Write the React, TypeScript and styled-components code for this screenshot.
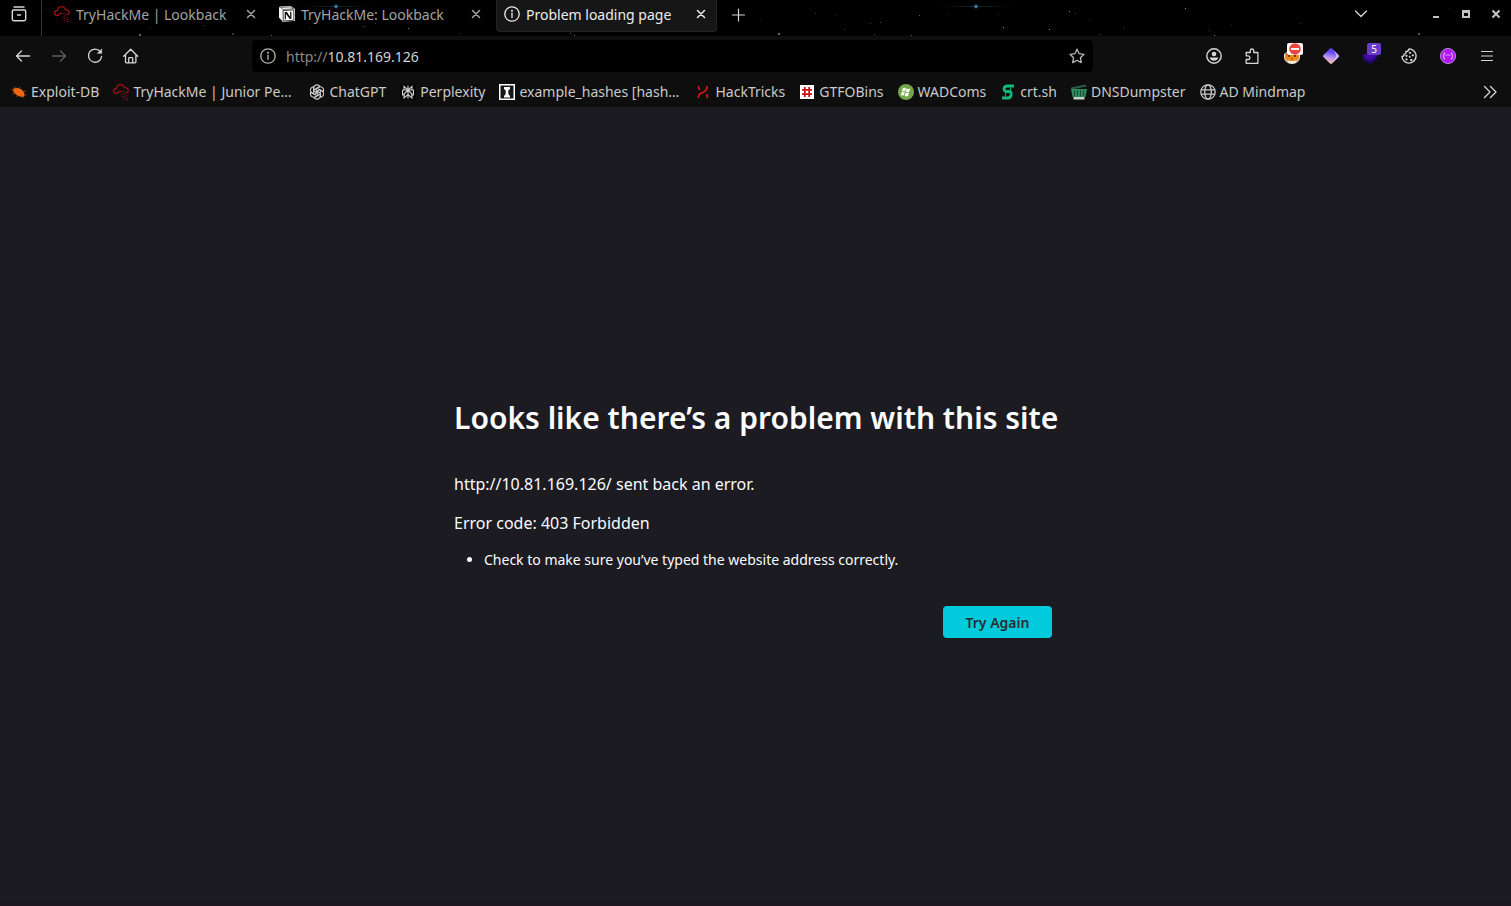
import React from 'react';
import styled, { createGlobalStyle } from 'styled-components';

const Global = createGlobalStyle`
  * { box-sizing: border-box; }
  html, body { margin: 0; padding: 0; }
  body {
    background: #1c1b22;
    color: #fbfbfe;
    font-family: "Noto Sans", sans-serif;
    font-size: 14px;
  }
  button, input { font: inherit; color: inherit; }
`;

const Window = styled.div`
  display: flex;
  flex-direction: column;
  min-height: 100vh;
  border-bottom: 4px solid #1a1721;
`;

const Chrome = styled.header`
  position: relative;
  background: #000;
  border-bottom: 1px solid #1f1b26;
  overflow: hidden;
`;

const Sky = styled.svg`
  position: absolute;
  top: 0;
  left: 0;
  width: 1920px;
  height: 108px;
`;

const IconButton = styled.button<{ $size?: number; $color?: string }>`
  display: flex;
  flex: none;
  align-items: center;
  justify-content: center;
  width: ${(p) => p.$size ?? 32}px;
  height: ${(p) => p.$size ?? 32}px;
  padding: 0;
  border: 0;
  border-radius: 4px;
  background: none;
  color: ${(p) => p.$color ?? '#d6d6d6'};
  cursor: pointer;
`;

const Glyph = styled.svg<{ $size?: number }>`
  display: block;
  flex: none;
  width: ${(p) => p.$size ?? 16}px;
  height: ${(p) => p.$size ?? 16}px;
`;

/* ---- tab strip ---- */

const TabStrip = styled.div`
  position: relative;
  display: flex;
  align-items: flex-start;
  height: 36px;
`;

const FirefoxView = styled.div`
  display: flex;
  align-items: flex-start;
  justify-content: center;
  width: 42px;
  height: 36px;
  padding-right: 4px;
  border-right: 1px solid #333;
`;

const TabList = styled.div`
  display: flex;
  gap: 4px;
  padding: 0 6px 0 4px;
`;

const Tab = styled.div<{ $active?: boolean }>`
  display: flex;
  align-items: center;
  width: 221px;
  height: 32px;
  padding: 0 3px 3px 7px;
  border: 1px solid ${(p) => (p.$active ? '#242424' : 'transparent')};
  border-top: 0;
  border-radius: 0 0 4px 4px;
  background: ${(p) => (p.$active ? '#161616' : 'transparent')};
  color: ${(p) => (p.$active ? '#ececec' : '#a2a2a2')};
`;

const TabTitle = styled.button`
  display: flex;
  flex: 1;
  align-items: center;
  gap: 6px;
  min-width: 0;
  padding: 0;
  border: 0;
  background: none;
  color: inherit;
  text-align: left;
  white-space: nowrap;
`;

const WindowControls = styled.div`
  display: flex;
  margin-left: auto;
  color: #c4c4c4;
`;

const TabsMenu = styled.div`
  margin-right: 45px;
`;

/* ---- navigation bar ---- */

const NavBar = styled.div`
  position: relative;
  display: flex;
  align-items: center;
  height: 40px;
  padding: 0 8px 0 7px;
  background: #0f0f0fee;
`;

const NavButtons = styled.div`
  display: flex;
  gap: 4px;
`;

const AddressBar = styled.form`
  display: flex;
  flex: 1;
  align-items: center;
  height: 32px;
  margin: 0 105px;
  border-radius: 4px;
  background: #000;
`;

const AddressText = styled.label`
  display: flex;
  flex: 1;
  align-items: center;
  padding-left: 2px;
  color: #8a8a8a;
`;

const AddressInput = styled.input`
  flex: 1;
  min-width: 0;
  padding: 0;
  border: 0;
  outline: 0;
  background: none;
  color: #d4d4d4;
`;

const Extensions = styled.div`
  display: flex;
  gap: 7px;
`;

const ExtensionButton = styled(IconButton)`
  position: relative;
`;

const Badge = styled.span<{ $bg: string; $wide?: boolean }>`
  position: absolute;
  top: 3px;
  right: 5px;
  display: flex;
  align-items: center;
  justify-content: center;
  width: ${(p) => (p.$wide ? 16 : 14)}px;
  height: 12px;
  border-radius: 2px;
  background: ${(p) => p.$bg};
  color: #fff;
  font-size: 10px;
  line-height: 12px;
`;

/* ---- bookmarks ---- */

const Bookmarks = styled.nav`
  position: relative;
  display: flex;
  align-items: center;
  gap: 14px;
  height: 31px;
  padding: 0 5px 0 11px;
  background: #0f0f0fee;
`;

const Bookmark = styled.a<{ $long?: boolean }>`
  display: flex;
  flex: none;
  align-items: center;
  gap: 4px;
  min-width: ${(p) => (p.$long ? 182 : 0)}px;
  color: #c9c9c9;
  text-decoration: none;
  white-space: nowrap;
`;

const Overflow = styled.div`
  margin-left: auto;
`;

/* ---- error page ---- */

const Page = styled.main`
  display: flex;
  flex: 1;
  flex-direction: column;
  align-items: center;
  justify-content: center;
  padding: 24px 16px 0;
`;

const ErrorBox = styled.section`
  width: 100%;
  max-width: 603px;
`;

const Heading = styled.h1`
  margin: 0 0 32px;
  font-size: 30px;
  font-weight: 600;
  line-height: 44px;
  white-space: nowrap;
`;

const Message = styled.p`
  margin: 0 0 15px;
  font-size: 16px;
  line-height: 24px;
`;

const Hints = styled.ul`
  margin: 0;
  padding-left: 30px;
  line-height: 20px;
`;

const Actions = styled.div`
  display: flex;
  justify-content: flex-end;
  padding: 36px 5px 0 0;
`;

const RetryButton = styled.button`
  min-width: 109px;
  height: 32px;
  border: 0;
  border-radius: 4px;
  background: #00cadb;
  color: #2b2a33;
  font-weight: 600;
  cursor: pointer;
`;

/* ---- drawings ---- */

const line = { fill: 'none', stroke: 'currentColor', strokeLinecap: 'round', strokeLinejoin: 'round' } as const;

const CloudIcon = () => (
  <Glyph viewBox="0 0 16 16" aria-hidden="true">
    <path d="M4 9.5C1.8 9.5.6 8.5.6 7S1.8 4.500 3.500 4.500C3.800 2 5.500.7 7.500.7c2.200 0 3.500 1.300 3.900 3 2.300 0 3.900 1 3.900 2.900 0 1-.5 1.700-1.200 2.100M4 9.500l2-2M6 7.500h2" fill="none" stroke="#9c1015" strokeWidth="1.300" />
    <path d="M9 7h2v1H9zM12 8h2v1h-2zM8 10h1v1H8zM10 9.500h2v1h-2zM13 11h1v1h-1zM9 12h2v1H9zM12 13h2v1h-2zM10 14.500h1v1h-1zM13 15h2v1h-2z" fill="#7d1216" />
  </Glyph>
);

const NotionIcon = () => (
  <Glyph viewBox="0 0 16 16" aria-hidden="true">
    <path d="M1 .6 11.800 0 16 3v11.800L4 16 0 11.500V1.500z" fill="#f4f4f4" />
    <path d="M1.500 1.500 4 3.500l10.500-.7L11.500 1z" fill="#fff" stroke="#222" strokeWidth=".6" />
    <path d="M4 4.600 14.800 3.900v10.300L4.300 15z" fill="#fff" stroke="#161616" strokeWidth=".8" />
    <path d="M6.300 6.500v6.800M11.800 5.700v6.800" stroke="#000" strokeWidth="1.200" />
    <path d="M5.600 6h2.200l4.600 6.800h-1.900z" fill="#000" />
  </Glyph>
);

const InfoIcon = () => (
  <Glyph viewBox="0 0 16 16" {...line} strokeWidth="1.300" aria-hidden="true">
    <circle cx="8" cy="8" r="7.200" />
    <path d="M8 7.200v4.300" />
    <circle cx="8" cy="4.700" r=".4" fill="currentColor" />
  </Glyph>
);

const CloseIcon = () => (
  <Glyph viewBox="0 0 16 16" {...line} strokeWidth="1.500" aria-hidden="true">
    <path d="m4.500 4.500 7 7M11.500 4.500l-7 7" />
  </Glyph>
);

const BugIcon = () => (
  <Glyph viewBox="0 0 16 16" aria-hidden="true">
    <path d="M2.500 4.500 5.500 3.800 10 5l3 3 .6 3.200L12 13l-3.500-.5L5 10.500 2 7.500z" fill="#f26513" />
    <path d="M.5 5.500 3 6M3 2.300l2 2.200M8.500 3v2M1.500 10.300l3-1M5.500 13l1-2M14.800 6.800 12.500 8M15.800 11h-2.500M13.300 14.500l-1.300-2" stroke="#a9480f" strokeWidth=".8" />
  </Glyph>
);

const GptIcon = () => (
  <Glyph viewBox="0 0 16 16" fill="none" stroke="#d4d4d4" strokeWidth="1.100" aria-hidden="true">
    {[0, 60, 120, 180, 240, 300].map((a) => (
      <path key={a} transform={`rotate(${a} 8 8)`} d="M4.700 9.400V4.500c0-2 1.500-3.600 3.300-3.600 1.200 0 2.200.5 2.900 1.500L7.200 4.600v3.800" />
    ))}
  </Glyph>
);

const PerplexityIcon = () => (
  <Glyph viewBox="0 0 16 16" aria-hidden="true">
    <path d="M0 0h16v16H0z" fill="#050505" />
    <path d="M8 1.500v13M4 2.500 8 6l4-3.500V6H4zM2.500 6h11v5H11M2.500 6v5H5M8 6l-4 4v4l4-3.500 4 3.500v-4z" fill="none" stroke="#cfcfcf" strokeWidth="1.100" />
  </Glyph>
);

const HashesIcon = () => (
  <Glyph viewBox="0 0 16 16" aria-hidden="true">
    <path d="M0 0h16v16H0z" fill="#fff" />
    <path d="M1.500 1.500h13v13h-13z" fill="#161616" />
    <path d="M5 3h6v2L9.300 6.500v3.500L11 12v1.500H5V12l1.700-2V6.500L5 5z" fill="#fff" />
  </Glyph>
);

const TricksIcon = () => (
  <Glyph viewBox="0 0 16 16" fill="none" stroke="#e0190f" strokeWidth="1.700" aria-hidden="true">
    <path d="M3.500 2c0 2 .5 3 1 4M3.300 14c.2-2.500 1-4.300 3.200-5 3.500-1.200 5.500-2.500 5.700-7M12.300 14c0-1.800-.3-3-.8-4" />
  </Glyph>
);

const GtfoIcon = () => (
  <Glyph viewBox="0 0 16 16" aria-hidden="true">
    <path d="M1 1h14v14H1z" fill="#fff" />
    <path d="M5.800 3v10M10.200 3v10M3 5.800h10M3 10.200h10" stroke="#c91414" strokeWidth="1.800" />
  </Glyph>
);

const WadIcon = () => (
  <Glyph viewBox="0 0 16 16" aria-hidden="true">
    <circle cx="8" cy="8" r="8" fill="#72a747" />
    <path d="M4.800 4.200c1.200-.6 2.100-.5 3.100 0L7 7.600c-.9-.5-1.900-.5-3.200 0zM8.600 4.600c1 .5 2.200.5 3.500 0L11.200 8c-1.300.5-2.400.5-3.500 0zM3.600 8.300c1.200-.6 2.200-.5 3.100 0l-.9 3.400c-.9-.5-1.900-.5-3.100 0zM7.500 8.700c1 .5 2.200.5 3.500 0l-.9 3.400c-1.300.5-2.400.5-3.500 0z" fill="#fff" />
  </Glyph>
);

const CrtIcon = () => (
  <Glyph viewBox="0 0 16 16" fill="none" stroke="#11b877" strokeWidth="2.800" aria-hidden="true">
    <path d="M14 2H7.500C5.500 2 4.300 3 4.100 4.700S5 7.500 6.500 7.500h2.700c1.500 0 2.200 1 2 2.800S9.800 14 8 14H2" />
    <path d="m11.500 1-1.500 6M5.800 9l-1.200 6" strokeWidth="1" />
  </Glyph>
);

const DumpsterIcon = () => (
  <Glyph viewBox="0 0 16 16" aria-hidden="true">
    <path d="M0 3.500 14.500.5l1 2L.5 5.500z" fill="#2c5a42" />
    <path d="M0 5h16l-1.500 8H1.500z" fill="#2f8a5c" />
    <path d="M3.500 6.500v6M6.500 6.500v6M9.500 6.500v6M12.500 6.500v6" stroke="#1a4d37" />
    <path d="M2.500 13h11v2.500h-11z" fill="#c9d2cc" />
  </Glyph>
);

const GlobeIcon = () => (
  <Glyph viewBox="0 0 16 16" {...line} strokeWidth="1.300" aria-hidden="true">
    <circle cx="8" cy="8" r="7.200" />
    <ellipse cx="8" cy="8" rx="3.300" ry="7.200" />
    <path d="M1.500 5.800h13M1.500 10.200h13" />
  </Glyph>
);

const CatIcon = () => (
  <Glyph viewBox="0 0 16 16" aria-hidden="true">
    <path d="M0 6 3 4h10l3 2v3a8 7 0 0 1-16 0z" fill="#f4e9dc" />
    <path d="M1 5l3 1h8l3-1v4.500c0 2-2.500 3.500-7 3.500s-7-1.500-7-3.500z" fill="#ef8a17" />
    <path d="M4 8h2M10 8h2M7.500 10.500h1M2.500 6l2 .5M13.500 6l-2 .5" stroke="#4b2306" strokeWidth="1.300" />
    <path d="M1.500 12 4 13.500M14.500 12 12 13.500" stroke="#8c8c8c" />
  </Glyph>
);

const PrismIcon = () => (
  <Glyph viewBox="0 0 16 16" aria-hidden="true">
    <defs>
      <linearGradient id="prism" x1=".6" y1="0" x2=".4" y2="1">
        <stop offset=".25" stopColor="#6447f4" />
        <stop offset=".6" stopColor="#b794f0" />
        <stop offset="1" stopColor="#ffc5a6" />
      </linearGradient>
    </defs>
    <path d="M7 .5Q8 0 9 .5l6.600 6.600q.8.9 0 1.800L9 15.500q-1 .8-2 0L.4 8.900q-.8-.9 0-1.800z" fill="url(#prism)" />
    <path d="m11 2.500 4.600 4.600q.8.900 0 1.800L9 15.500 13.500 8z" fill="#e3ccff" opacity=".75" />
  </Glyph>
);

const LayersIcon = () => (
  <Glyph viewBox="0 0 16 16" aria-hidden="true">
    <path d="M0 11.500 8 7.500l8 4L8 16z" fill="#1f0a63" />
    <path d="M0 8 8 3l8 5-8 5z" fill="#4209a8" />
  </Glyph>
);

const CookieIcon = () => (
  <Glyph viewBox="0 0 16 16" {...line} strokeWidth="1.400" aria-hidden="true">
    <path d="M8 .9A7.100 7.100 0 1 1 .9 8.500c1.300.1 2.300-.8 2.100-2.200 1.500-.1 2.300-1.300 1.900-2.800C6.500 3.700 7.700 2.500 8 .9z" />
    <g fill="currentColor" stroke="none">
      <circle cx="9" cy="4.800" r="1.100" />
      <circle cx="5.500" cy="7.800" r="1.100" />
      <circle cx="11.800" cy="7.300" r="1.100" />
      <circle cx="8.700" cy="8.800" r="1" />
      <circle cx="5.500" cy="11.400" r="1.100" />
      <circle cx="10.300" cy="12" r="1.200" />
    </g>
  </Glyph>
);

const FaceIcon = () => (
  <Glyph viewBox="0 0 16 16" aria-hidden="true">
    <circle cx="8" cy="8" r="7.600" fill="#b01af0" stroke="#e5b0fa" strokeWidth=".7" />
    <path d="M5 4.500C3.500 4.500 4.500 7.500 3 8c1.500.5.500 3.500 2 3.500M11 4.500c1.500 0 .5 3 2 3.500-1.500.5-.5 3.500-2 3.500" fill="none" stroke="#f2d5fd" strokeWidth=".9" />
    <path d="M5.500 7h1M7.500 7h1M9.500 7h1" stroke="#fff" strokeWidth="1.200" />
  </Glyph>
);

const stars: [number, number, number, string][] = [
  [11, 42, 1, '#333'], [45, 8, 1, '#222'], [139, 34, 2, '#666'], [150, 27, 1, '#333'], [204, 25, 1, '#444'], [232, 33, 2, '#333'],
  [271, 35, 1, '#666'], [309, 28, 1, '#333'], [363, 26, 1, '#555'], [375, 23, 1, '#333'], [408, 28, 1, '#976'], [460, 33, 1, '#433'],
  [574, 35, 1, '#a66'], [570, 33, 1, '#455'], [760, 20, 1, '#222'], [778, 33, 2, '#666'], [815, 13, 1, '#333'], [835, 15, 1, '#222'],
  [844, 29, 1, '#333'], [870, 23, 1, '#444'], [880, 22, 1, '#444'], [874, 34, 1, '#444'], [911, 35, 1, '#555'], [919, 15, 1, '#666'],
  [948, 14, 1, '#222'], [998, 14, 1, '#333'], [1003, 27, 1, '#b77'], [1049, 29, 1, '#b77'], [1069, 11, 1, '#777'], [1075, 13, 1, '#333'],
  [1089, 19, 1, '#333'], [1100, 34, 1, '#444'], [1123, 27, 1, '#333'], [1185, 8, 1, '#888'], [1209, 30, 1, '#444'], [1214, 35, 1, '#966'],
  [1231, 24, 1, '#222'], [1300, 23, 1, '#333'], [1418, 33, 2, '#555'], [1450, 8, 1, '#222'], [1010, 75, 1, '#555'], [407, 75, 1, '#555'],
  [30, 65, 1, '#444'], [190, 60, 1, '#444'], [1228, 72, 1, '#555'], [1367, 85, 1, '#555'], [680, 98, 1, '#444'], [230, 100, 1, '#444'],
];

const Starfield = () => (
  <Sky viewBox="0 0 1920 108" aria-hidden="true">
    <defs>
      <radialGradient id="glow">
        <stop offset="0" stopColor="#2b7fa6" />
        <stop offset="1" stopColor="#0a2a44" stopOpacity="0" />
      </radialGradient>
    </defs>
    {stars.map(([x, y, s, c]) => <rect key={`${x}-${y}`} x={x} y={y} width={s} height={s} fill={c} />)}
    {[336, 976].map((x) => (
      <g key={x}>
        <ellipse cx={x} cy="6.500" rx="42" ry="1" fill="url(#glow)" opacity=".35" />
        <circle cx={x} cy="6.500" r="4" fill="url(#glow)" opacity=".6" />
        <circle cx={x} cy="6.500" r="1.300" fill="#4f9dbb" />
      </g>
    ))}
  </Sky>
);

const tabs = [
  { title: 'TryHackMe | Lookback', icon: <CloudIcon /> },
  { title: 'TryHackMe: Lookback', icon: <NotionIcon /> },
  { title: 'Problem loading page', icon: <InfoIcon />, active: true },
];

const bookmarks = [
  { name: 'Exploit-DB', icon: <BugIcon /> },
  { name: 'TryHackMe | Junior Pe…', icon: <CloudIcon />, long: true },
  { name: 'ChatGPT', icon: <GptIcon /> },
  { name: 'Perplexity', icon: <PerplexityIcon /> },
  { name: 'example_hashes [hash…', icon: <HashesIcon />, long: true },
  { name: 'HackTricks', icon: <TricksIcon /> },
  { name: 'GTFOBins', icon: <GtfoIcon /> },
  { name: 'WADComs', icon: <WadIcon /> },
  { name: 'crt.sh', icon: <CrtIcon /> },
  { name: 'DNSDumpster', icon: <DumpsterIcon /> },
  { name: 'AD Mindmap', icon: <GlobeIcon /> },
];

export default function App() {
  return (
    <Window>
      <Global />
      <Chrome>
        <Starfield />
        <TabStrip>
          <FirefoxView>
            <IconButton aria-label="Firefox View" $size={28}>
              <Glyph viewBox="0 0 16 16" {...line} strokeWidth="1.400">
                <path d="M3 1h10M2.500 4h11c.7 0 1.200.5 1.200 1.200V13c0 1-.7 1.700-1.700 1.700H3c-1 0-1.700-.7-1.700-1.700V5.200C1.300 4.500 1.800 4 2.500 4zM6.500 9h3" />
              </Glyph>
            </IconButton>
          </FirefoxView>
          <TabList>
            {tabs.map((t) => (
              <Tab key={t.title} $active={t.active}>
                <TabTitle>{t.icon}{t.title}</TabTitle>
                <IconButton aria-label="Close tab" $size={24} $color="inherit"><CloseIcon /></IconButton>
              </Tab>
            ))}
          </TabList>
          <IconButton aria-label="New tab" $size={30}>
            <Glyph viewBox="0 0 16 16" {...line} strokeWidth="1.200"><path d="M8.500 2v12M2.500 8h12" /></Glyph>
          </IconButton>
          <WindowControls>
            <TabsMenu>
              <IconButton aria-label="List all tabs" $size={30}>
                <Glyph viewBox="0 0 16 16" {...line} strokeWidth="1.300"><path d="m2.500 4 5.500 5.500L13.500 4" /></Glyph>
              </IconButton>
            </TabsMenu>
            <IconButton aria-label="Minimize" $size={30} $color="#c4c4c4">
              <Glyph viewBox="0 0 16 16"><path d="M5 9h6v2H5z" fill="currentColor" /></Glyph>
            </IconButton>
            <IconButton aria-label="Maximize" $size={30} $color="#c4c4c4">
              <Glyph viewBox="0 0 16 16"><path d="M4 3h8v8H4zM6 6v3h4V6z" fill="currentColor" fillRule="evenodd" /></Glyph>
            </IconButton>
            <IconButton aria-label="Close window" $size={30} $color="#c4c4c4">
              <Glyph viewBox="0 0 16 16"><path d="m4.500 3.500 7 7M11.500 3.500l-7 7" stroke="currentColor" strokeWidth="2" /></Glyph>
            </IconButton>
          </WindowControls>
        </TabStrip>

        <NavBar>
          <NavButtons>
            <IconButton aria-label="Back">
              <Glyph viewBox="0 0 16 16" {...line} strokeWidth="1.300"><path d="M14.500 8h-13M6.500 3l-5 5 5 5" /></Glyph>
            </IconButton>
            <IconButton aria-label="Forward" $color="#5c5c5c">
              <Glyph viewBox="0 0 16 16" {...line} strokeWidth="1.300"><path d="M1.500 8h13M9.500 3l5 5-5 5" /></Glyph>
            </IconButton>
            <IconButton aria-label="Reload">
              <Glyph viewBox="0 0 16 16" {...line} strokeWidth="1.300">
                <path d="M13.200 3.500A6.600 6.600 0 1 0 14.600 8.500" />
                <path d="M14.700 1.300v4h-4z" fill="currentColor" strokeWidth=".6" />
              </Glyph>
            </IconButton>
            <IconButton aria-label="Home">
              <Glyph viewBox="0 0 16 16" {...line} strokeWidth="1.300">
                <path d="M.7 8.200 7.700 1.300l7 6.900M2.500 6.700V14c0 .5.300.8.800.8h8.800c.5 0 .8-.3.800-.8V6.700M5.700 14.500V10.500c0-.5.300-.8.800-.8h2.400c.5 0 .8.300.8.800v4" />
              </Glyph>
            </IconButton>
          </NavButtons>
          <AddressBar>
            <IconButton type="button" aria-label="Site information" $color="#b4b4b4"><InfoIcon /></IconButton>
            <AddressText>
              http://
              <AddressInput aria-label="Address" defaultValue="10.81.169.126" />
            </AddressText>
            <IconButton type="button" aria-label="Bookmark this page" $color="#b8b8b8">
              <Glyph viewBox="0 0 16 16" {...line} strokeWidth="1.300">
                <path d="m8 1.200 2.100 4.500 4.900.6-3.600 3.400.9 4.900L8 12.200l-4.300 2.400.9-4.900L1 6.300l4.900-.6z" />
              </Glyph>
            </IconButton>
          </AddressBar>
          <Extensions>
            <IconButton aria-label="Account">
              <Glyph viewBox="0 0 16 16" {...line} strokeWidth="1.400">
                <circle cx="8" cy="8" r="7.200" />
                <circle cx="8" cy="6" r="2.300" fill="currentColor" stroke="none" />
                <path d="M3.800 9.500h8.400c0 2-1.800 3.200-4.200 3.200s-4.200-1.200-4.200-3.200z" fill="currentColor" stroke="none" />
              </Glyph>
            </IconButton>
            <IconButton aria-label="Extensions">
              <Glyph viewBox="0 0 16 16" {...line} strokeWidth="1.300">
                <path d="M1.200 15.300h11.700V4.500H8.700V2.700a1.700 1.700 0 0 0-3.400 0v1.800H1.200v3.300H3a1.800 1.800 0 0 1 0 3.700H1.200z" />
              </Glyph>
            </IconButton>
            <ExtensionButton aria-label="FoxyProxy">
              <CatIcon />
              <Badge $bg="#fff" $wide>
                <Glyph viewBox="0 0 12 12" $size={12}><circle cx="6" cy="6" r="5.800" fill="#f0453f" /><path d="M2 5h8v2H2z" fill="#fff" /></Glyph>
              </Badge>
            </ExtensionButton>
            <ExtensionButton aria-label="Prism"><PrismIcon /></ExtensionButton>
            <ExtensionButton aria-label="Wappalyzer"><LayersIcon /><Badge $bg="#6a3bc4">5</Badge></ExtensionButton>
            <ExtensionButton aria-label="Cookie editor"><CookieIcon /></ExtensionButton>
            <ExtensionButton aria-label="Code tools"><FaceIcon /></ExtensionButton>
            <IconButton aria-label="Menu">
              <Glyph viewBox="0 0 16 16" {...line} strokeWidth="1.200"><path d="M2.500 3.500h11M2.500 8h11M2.500 12.500h11" /></Glyph>
            </IconButton>
          </Extensions>
        </NavBar>

        <Bookmarks aria-label="Bookmarks">
          {bookmarks.map((b) => (
            <Bookmark key={b.name} href="#" $long={b.long}>
              {b.icon}
              {b.name}
            </Bookmark>
          ))}
          <Overflow>
            <IconButton aria-label="Show more bookmarks">
              <Glyph viewBox="0 0 16 16" {...line} strokeWidth="1.300"><path d="m2.500 2.500 5.500 5.500-5.500 5.500M8.500 2.500 14 8l-5.500 5.500" /></Glyph>
            </IconButton>
          </Overflow>
        </Bookmarks>
      </Chrome>

      <Page>
        <ErrorBox>
          <Heading>Looks like there’s a problem with this site</Heading>
          <Message>http://10.81.169.126/ sent back an error.</Message>
          <Message>Error code: 403 Forbidden</Message>
          <Hints>
            <li>Check to make sure you’ve typed the website address correctly.</li>
          </Hints>
          <Actions>
            <RetryButton>Try Again</RetryButton>
          </Actions>
        </ErrorBox>
      </Page>
    </Window>
  );
}
